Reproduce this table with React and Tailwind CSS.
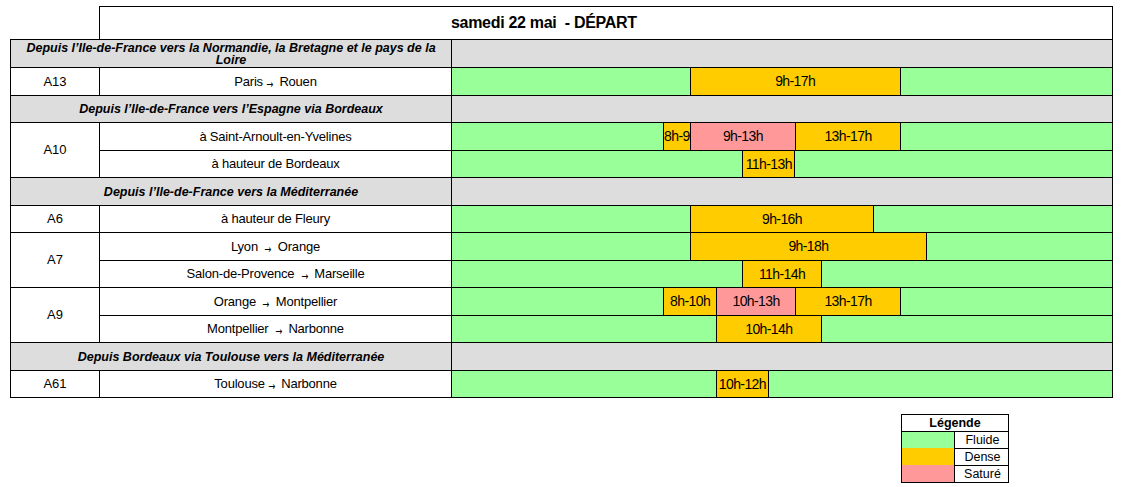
import React from 'react';

const FLUIDE = 'bg-[#99ff99]';
const DENSE = 'bg-[#ffcc00]';
const SATURE = 'bg-[#ff9999]';

const sections = [
  {
    title: 'Depuis l’Ile-de-France vers la Normandie, la Bretagne et le pays de la Loire',
    h: 'h-[28px]',
    groups: [
      {
        road: 'A13',
        rows: [
          {
            label: ['Paris', 'Rouen'],
            h: 'h-[28px]',
            bars: [{ pos: 'col-start-10 col-span-8', color: DENSE, text: '9h-17h', b: 'border-x' }],
          },
        ],
      },
    ],
  },
  {
    title: 'Depuis l’Ile-de-France vers l’Espagne via Bordeaux',
    h: 'h-[27px]',
    groups: [
      {
        road: 'A10',
        rows: [
          {
            label: 'à Saint-Arnoult-en-Yvelines',
            h: 'h-[28px]',
            bars: [
              { pos: 'col-start-9 col-span-1', color: DENSE, text: '8h-9', b: 'border-l' },
              { pos: 'col-start-10 col-span-4', color: SATURE, text: '9h-13h', b: 'border-l' },
              { pos: 'col-start-14 col-span-4', color: DENSE, text: '13h-17h', b: 'border-x' },
            ],
          },
          {
            label: 'à hauteur de Bordeaux',
            h: 'h-[27px]',
            bars: [{ pos: 'col-start-12 col-span-2', color: DENSE, text: '11h-13h', b: 'border-x' }],
          },
        ],
      },
    ],
  },
  {
    title: 'Depuis l’Ile-de-France vers la Méditerranée',
    h: 'h-[28px]',
    groups: [
      {
        road: 'A6',
        rows: [
          {
            label: 'à hauteur de Fleury',
            h: 'h-[27px]',
            bars: [{ pos: 'col-start-10 col-span-7', color: DENSE, text: '9h-16h', b: 'border-x' }],
          },
        ],
      },
      {
        road: 'A7',
        rows: [
          {
            label: ['Lyon', 'Orange'],
            spaced: true,
            h: 'h-[28px]',
            bars: [{ pos: 'col-start-10 col-span-9', color: DENSE, text: '9h-18h', b: 'border-x' }],
          },
          {
            label: ['Salon-de-Provence', 'Marseille'],
            spaced: true,
            h: 'h-[27px]',
            bars: [{ pos: 'col-start-12 col-span-3', color: DENSE, text: '11h-14h', b: 'border-x' }],
          },
        ],
      },
      {
        road: 'A9',
        rows: [
          {
            label: ['Orange', 'Montpellier'],
            spaced: true,
            h: 'h-[28px]',
            bars: [
              { pos: 'col-start-9 col-span-2', color: DENSE, text: '8h-10h', b: 'border-l' },
              { pos: 'col-start-11 col-span-3', color: SATURE, text: '10h-13h', b: 'border-l' },
              { pos: 'col-start-14 col-span-4', color: DENSE, text: '13h-17h', b: 'border-x' },
            ],
          },
          {
            label: ['Montpellier', 'Narbonne'],
            spaced: true,
            h: 'h-[27px]',
            bars: [{ pos: 'col-start-11 col-span-4', color: DENSE, text: '10h-14h', b: 'border-x' }],
          },
        ],
      },
    ],
  },
  {
    title: 'Depuis Bordeaux via Toulouse vers la Méditerranée',
    h: 'h-[28px]',
    groups: [
      {
        road: 'A61',
        rows: [
          {
            label: ['Toulouse', 'Narbonne'],
            h: 'h-[27px]',
            bars: [{ pos: 'col-start-11 col-span-2', color: DENSE, text: '10h-12h', b: 'border-x' }],
          },
        ],
      },
    ],
  },
];

const Arrow = () => (
  <span className="inline-block mx-[2px] text-[11px] leading-none align-[-2px] font-['DejaVu_Sans',sans-serif] scale-x-75">
    →
  </span>
);

const RowLabel = ({ label, spaced }) => {
  if (typeof label === 'string') return <span>{label}</span>;
  return (
    <span>
      {label[0]}
      {spaced ? ' ' : ''}
      <Arrow />
      {' '}
      {label[1]}
    </span>
  );
};

const Timeline = ({ bars }) => (
  <div className={`flex-1 h-full grid grid-cols-[repeat(25,minmax(0,1fr))] grid-rows-1 ${FLUIDE}`}>
    {bars.map((bar) => (
      <div
        key={bar.text}
        className={`${bar.pos} row-start-1 ${bar.color} ${bar.b} border-black flex items-center justify-center overflow-hidden whitespace-nowrap text-[14px] tracking-[-0.6px] font-['Liberation_Sans_Narrow','Liberation_Sans',sans-serif]`}
      >
        {bar.text}
      </div>
    ))}
  </div>
);

const App = () => {
  return (
    <div className="w-[1122px] h-[487px] bg-white pt-[6px] pl-[10px] text-black font-['Liberation_Sans',Arial,sans-serif]">
      {/* Header */}
      <div className="ml-[89px] w-[1014px] h-[33px] border-t border-x border-black flex items-center pl-[351px]">
        <h1 className="text-[16px] font-bold tracking-[-0.3px]">samedi 22 mai&nbsp; - DÉPART</h1>
      </div>

      {/* Table */}
      <div className="w-[1103px] border-x border-b border-black">
        {sections.map((section) => (
          <div key={section.title}>
            <div className={`flex ${section.h} border-t border-black bg-[#dddddd]`}>
              <div className="w-[441px] border-r border-black flex items-center justify-center text-center px-[6px] text-[12.5px] leading-[12px] font-bold italic">
                {section.title}
              </div>
              <div className="flex-1" />
            </div>

            {section.groups.map((group) => (
              <div key={group.road} className="flex">
                <div className="w-[89px] border-t border-r border-black flex items-center justify-center text-[13px]">
                  {group.road}
                </div>
                <div className="flex-1 flex flex-col">
                  {group.rows.map((row, i) => (
                    <div key={i} className={`flex ${row.h} border-t border-black`}>
                      <div className="w-[352px] h-full border-r border-black flex items-center justify-center text-[13px] tracking-[-0.2px]">
                        <RowLabel label={row.label} spaced={row.spaced} />
                      </div>
                      <Timeline bars={row.bars} />
                    </div>
                  ))}
                </div>
              </div>
            ))}
          </div>
        ))}
      </div>

      {/* Legend */}
      <div className="mt-[16px] ml-[891px] w-[108px] border border-black text-[12.5px]">
        <div className="h-[17px] border-b border-black flex items-center justify-center font-bold leading-none">
          Légende
        </div>
        <div className="flex h-[16px]">
          <div className={`w-[52px] ${FLUIDE}`} />
          <div className="flex-1 border-l border-black flex items-center justify-center pl-[2px] leading-none">Fluide</div>
        </div>
        <div className="flex h-[17px]">
          <div className={`w-[52px] ${DENSE}`} />
          <div className="flex-1 border-l border-t border-black flex items-center justify-center pl-[2px] leading-none">Dense</div>
        </div>
        <div className="flex h-[17px]">
          <div className={`w-[52px] ${SATURE}`} />
          <div className="flex-1 border-l border-t border-black flex items-center justify-center pl-[2px] leading-none">Saturé</div>
        </div>
      </div>
    </div>
  );
};

export default App;
